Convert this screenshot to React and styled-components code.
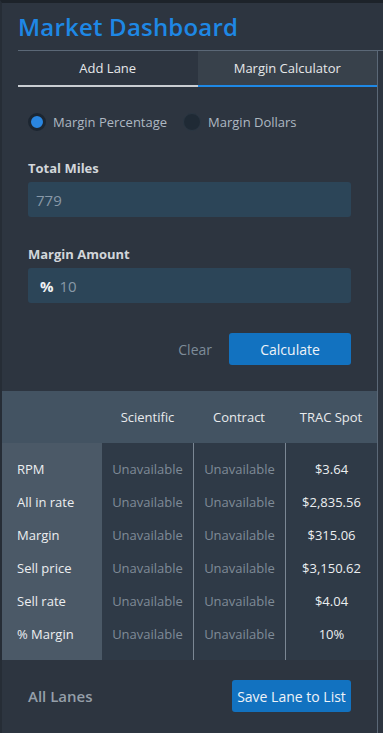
import React from "react";
import styled, { createGlobalStyle } from "styled-components";

const GlobalStyle = createGlobalStyle`
  html, body {
    margin: 0;
    padding: 0;
    background: #2d3540;
  }
  body {
    font-family: "Open Sans", "Noto Sans", sans-serif;
  }
`;

const rows = [
  { label: "RPM", sci: "Unavailable", con: "Unavailable", trac: "$3.64" },
  { label: "All in rate", sci: "Unavailable", con: "Unavailable", trac: "$2,835.56" },
  { label: "Margin", sci: "Unavailable", con: "Unavailable", trac: "$315.06" },
  { label: "Sell price", sci: "Unavailable", con: "Unavailable", trac: "$3,150.62" },
  { label: "Sell rate", sci: "Unavailable", con: "Unavailable", trac: "$4.04" },
  { label: "% Margin", sci: "Unavailable", con: "Unavailable", trac: "10%" },
];

export default function App() {
  return (
    <Page>
      <GlobalStyle />
      <Title>Market Dashboard</Title>
      <TabsBar>
        <Tabs>
          <Tab>Add Lane</Tab>
          <Tab active>Margin Calculator</Tab>
        </Tabs>
      </TabsBar>
      <Content>
        <Form>
          <RadioRow>
            <RadioItem>
              <Radio checked />
              Margin Percentage
            </RadioItem>
            <RadioItem>
              <Radio />
              Margin Dollars
            </RadioItem>
          </RadioRow>

          <Field>
            <Label>Total Miles</Label>
            <Input>
              <Value>779</Value>
            </Input>
          </Field>

          <Field>
            <Label>Margin Amount</Label>
            <Input>
              <Prefix>%</Prefix>
              <Value>10</Value>
            </Input>
          </Field>

          <Actions>
            <ClearButton>Clear</ClearButton>
            <PrimaryButton width="122px">Calculate</PrimaryButton>
          </Actions>
        </Form>

        <Table>
          <HeadRow>
            <HeadCell />
            <HeadCell>Scientific</HeadCell>
            <HeadCell>Contract</HeadCell>
            <HeadCell>TRAC Spot</HeadCell>
          </HeadRow>
          <Body>
            <Column label>
              {rows.map((r) => (
                <Cell key={r.label} align="left">{r.label}</Cell>
              ))}
            </Column>
            <Column>
              {rows.map((r) => (
                <Cell key={r.label} muted>{r.sci}</Cell>
              ))}
            </Column>
            <Column divider>
              {rows.map((r) => (
                <Cell key={r.label} muted>{r.con}</Cell>
              ))}
            </Column>
            <Column divider>
              {rows.map((r) => (
                <Cell key={r.label}>{r.trac}</Cell>
              ))}
            </Column>
          </Body>
        </Table>

        <Footer>
          <FooterTitle>All Lanes</FooterTitle>
          <PrimaryButton width="119px">Save Lane to List</PrimaryButton>
        </Footer>
      </Content>
    </Page>
  );
}

const Page = styled.div`
  width: 381px;
  min-height: 730px;
  border-top: 3px solid #1d232a;
  border-left: 2px solid #262d36;
  background: #2d3540;
  display: flex;
  flex-direction: column;
`;

const Title = styled.h1`
  margin: 0;
  height: 47px;
  padding-left: 16px;
  display: flex;
  align-items: center;
  font-size: 24px;
  font-weight: 600;
  color: #1e88e5;
  letter-spacing: 0.2px;
`;

const TabsBar = styled.div`
  margin-left: 16px;
  border-top: 1px solid #5b6877;
`;

const Tabs = styled.div`
  width: 359px;
  display: flex;
  border-right: 1px solid #5b6877;
`;

const Tab = styled.div`
  flex: 1;
  height: 34px;
  display: flex;
  align-items: center;
  justify-content: center;
  font-size: 13px;
  color: #e6e8ea;
  background: ${(p) => (p.active ? "#38414b" : "transparent")};
  border-bottom: 2px solid ${(p) => (p.active ? "#1e88e5" : "#c9cdd2")};
`;

const Content = styled.div`
  width: 375px;
  border-right: 1px solid #5b6877;
  flex: 1;
  display: flex;
  flex-direction: column;
`;

const Form = styled.div`
  padding: 26px 26px 26px 26px;
  display: flex;
  flex-direction: column;
`;

const RadioRow = styled.div`
  display: flex;
  gap: 16px;
  height: 18px;
  align-items: center;
`;

const RadioItem = styled.label`
  display: flex;
  align-items: center;
  gap: 7px;
  font-size: 13px;
  color: #aeb8c2;
`;

const Radio = styled.span`
  width: 18px;
  height: 18px;
  box-sizing: border-box;
  border-radius: 50%;
  background: ${(p) => (p.checked ? "#2a86e0" : "#1f2a35")};
  border: ${(p) => (p.checked ? "3px solid #1c2631" : "1px solid #2a3642")};
`;

const Field = styled.div`
  margin-top: 28px;
  display: flex;
  flex-direction: column;
  gap: 5px;
`;

const Label = styled.div`
  font-size: 13px;
  font-weight: 700;
  color: #d2d6da;
  line-height: 18px;
`;

const Input = styled.div`
  height: 35px;
  border-radius: 3px;
  background: #2c4558;
  display: flex;
  align-items: center;
  padding: 0 8px;
  gap: 6px;
  font-size: 15px;
`;

const Prefix = styled.span`
  font-weight: 700;
  color: #f0f2f4;
  padding-left: 4px;
`;

const Value = styled.span`
  color: #8898a7;
`;

const Actions = styled.div`
  margin-top: 30px;
  display: flex;
  justify-content: flex-end;
  align-items: center;
  gap: 17px;
`;

const ClearButton = styled.span`
  font-size: 14px;
  color: #7d8c9a;
`;

const PrimaryButton = styled.div`
  width: ${(p) => p.width};
  height: 32px;
  border-radius: 3px;
  background: #1272c0;
  color: #eef3f8;
  font-size: 14px;
  display: flex;
  align-items: center;
  justify-content: center;
`;

const Table = styled.div`
  display: flex;
  flex-direction: column;
`;

const HeadRow = styled.div`
  display: grid;
  grid-template-columns: 100px 91px 92px 92px;
  height: 52px;
  background: #435362;
`;

const HeadCell = styled.div`
  display: flex;
  align-items: center;
  justify-content: center;
  font-size: 13px;
  color: #e8eaec;
`;

const Body = styled.div`
  display: grid;
  grid-template-columns: 100px 91px 92px 92px;
`;

const Column = styled.div`
  display: flex;
  flex-direction: column;
  padding: 9px 0 10px;
  background: ${(p) => (p.label ? "#4b5967" : "#2f3a47")};
  border-left: ${(p) => (p.divider ? "1px solid #7b8794" : "none")};
`;

const Cell = styled.div`
  height: 33px;
  display: flex;
  align-items: center;
  justify-content: ${(p) => (p.align === "left" ? "flex-start" : "center")};
  padding-left: ${(p) => (p.align === "left" ? "15px" : "0")};
  font-size: 13px;
  color: ${(p) => (p.muted ? "#7f8b97" : "#eceef0")};
`;

const Footer = styled.div`
  flex: 1;
  display: flex;
  align-items: center;
  justify-content: space-between;
  padding: 20px 26px 22px 26px;
`;

const FooterTitle = styled.div`
  font-size: 15px;
  font-weight: 600;
  color: #959fa9;
`;
